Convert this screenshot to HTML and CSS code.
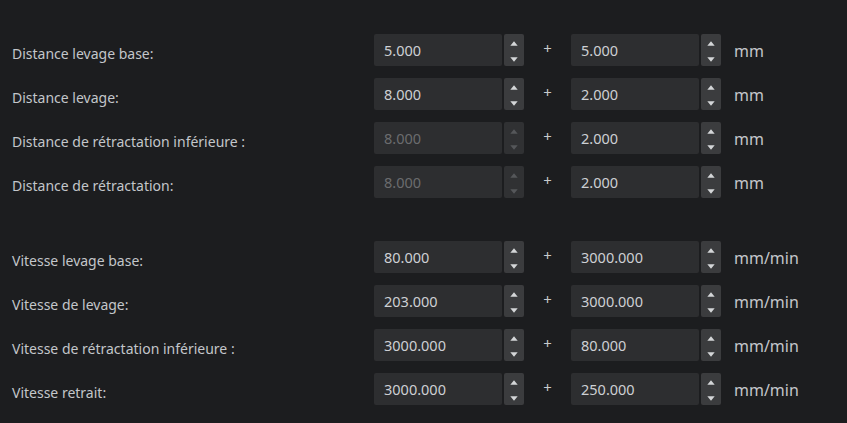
FILE: index.html
```html
<!DOCTYPE html>
<html lang="fr">
<head>
<meta charset="utf-8">
<link rel="stylesheet" href="styles.css">
</head>
<body>
<svg width="0" height="0" style="position:absolute">
  <defs>
    <symbol id="up" viewBox="0 0 8 5"><path d="M4 0.3 L7.7 4.7 L0.3 4.7 Z" fill="currentColor"/></symbol>
    <symbol id="down" viewBox="0 0 8 5"><path d="M0.3 0.3 L7.7 0.3 L4 4.7 Z" fill="currentColor"/></symbol>
  </defs>
</svg>
<div class="panel">
  <div class="group">
    <div class="row">
      <div class="label">Distance levage base:</div>
      <div class="spin"><div class="field">5.000</div><div class="btns"><svg class="a"><use href="#up"/></svg><svg class="a"><use href="#down"/></svg></div></div>
      <div class="plus">+</div>
      <div class="spin"><div class="field">5.000</div><div class="btns"><svg class="a"><use href="#up"/></svg><svg class="a"><use href="#down"/></svg></div></div>
      <div class="unit">mm</div>
    </div>
    <div class="row">
      <div class="label">Distance levage:</div>
      <div class="spin"><div class="field">8.000</div><div class="btns"><svg class="a"><use href="#up"/></svg><svg class="a"><use href="#down"/></svg></div></div>
      <div class="plus">+</div>
      <div class="spin"><div class="field">2.000</div><div class="btns"><svg class="a"><use href="#up"/></svg><svg class="a"><use href="#down"/></svg></div></div>
      <div class="unit">mm</div>
    </div>
    <div class="row">
      <div class="label">Distance de rétractation inférieure :</div>
      <div class="spin disabled"><div class="field">8.000</div><div class="btns"><svg class="a"><use href="#up"/></svg><svg class="a"><use href="#down"/></svg></div></div>
      <div class="plus">+</div>
      <div class="spin"><div class="field">2.000</div><div class="btns"><svg class="a"><use href="#up"/></svg><svg class="a"><use href="#down"/></svg></div></div>
      <div class="unit">mm</div>
    </div>
    <div class="row">
      <div class="label">Distance de rétractation:</div>
      <div class="spin disabled"><div class="field">8.000</div><div class="btns"><svg class="a"><use href="#up"/></svg><svg class="a"><use href="#down"/></svg></div></div>
      <div class="plus">+</div>
      <div class="spin"><div class="field">2.000</div><div class="btns"><svg class="a"><use href="#up"/></svg><svg class="a"><use href="#down"/></svg></div></div>
      <div class="unit">mm</div>
    </div>
  </div>
  <div class="group">
    <div class="row">
      <div class="label">Vitesse levage base:</div>
      <div class="spin"><div class="field">80.000</div><div class="btns"><svg class="a"><use href="#up"/></svg><svg class="a"><use href="#down"/></svg></div></div>
      <div class="plus">+</div>
      <div class="spin"><div class="field">3000.000</div><div class="btns"><svg class="a"><use href="#up"/></svg><svg class="a"><use href="#down"/></svg></div></div>
      <div class="unit">mm/min</div>
    </div>
    <div class="row">
      <div class="label">Vitesse de levage:</div>
      <div class="spin"><div class="field">203.000</div><div class="btns"><svg class="a"><use href="#up"/></svg><svg class="a"><use href="#down"/></svg></div></div>
      <div class="plus">+</div>
      <div class="spin"><div class="field">3000.000</div><div class="btns"><svg class="a"><use href="#up"/></svg><svg class="a"><use href="#down"/></svg></div></div>
      <div class="unit">mm/min</div>
    </div>
    <div class="row">
      <div class="label">Vitesse de rétractation inférieure :</div>
      <div class="spin"><div class="field">3000.000</div><div class="btns"><svg class="a"><use href="#up"/></svg><svg class="a"><use href="#down"/></svg></div></div>
      <div class="plus">+</div>
      <div class="spin"><div class="field">80.000</div><div class="btns"><svg class="a"><use href="#up"/></svg><svg class="a"><use href="#down"/></svg></div></div>
      <div class="unit">mm/min</div>
    </div>
    <div class="row">
      <div class="label">Vitesse retrait:</div>
      <div class="spin"><div class="field">3000.000</div><div class="btns"><svg class="a"><use href="#up"/></svg><svg class="a"><use href="#down"/></svg></div></div>
      <div class="plus">+</div>
      <div class="spin"><div class="field">250.000</div><div class="btns"><svg class="a"><use href="#up"/></svg><svg class="a"><use href="#down"/></svg></div></div>
      <div class="unit">mm/min</div>
    </div>
  </div>
</div>
</body>
</html>
```
FILE: styles.css
```css
html, body {
  margin: 0;
  padding: 0;
  background: #1c1d1f;
  height: 100%;
  overflow: hidden;
}
body {
  font-family: "Noto Sans", "Open Sans", sans-serif;
  color: #c3c6ca;
}
.panel {
  padding: 34px 0 0 12px;
  display: flex;
  flex-direction: column;
  gap: 43px;
}
.group {
  display: flex;
  flex-direction: column;
  gap: 12px;
}
.row {
  display: flex;
  align-items: center;
  height: 32px;
}
.label {
  width: 362px;
  font-size: 14px;
  padding-top: 6px;
  color: #c3c6ca;
  white-space: nowrap;
}
.spin {
  display: flex;
  gap: 2px;
  height: 32px;
}
.field {
  width: 118px;
  padding-left: 10px;
  background: #2d2e30;
  border-radius: 2px;
  font-size: 14.5px;
  line-height: 32px;
  color: #cdd0d4;
}
.btns {
  width: 20px;
  background: #3b3c3e;
  border-radius: 2px;
  display: flex;
  flex-direction: column;
  align-items: center;
  justify-content: space-between;
  padding: 7px 0 4px;
  box-sizing: border-box;
  color: #d4d6d8;
}
.a {
  width: 8px;
  height: 5px;
}
.disabled .field {
  color: #6b6c6e;
}
.disabled .btns {
  background: #303133;
  color: #55575a;
}
.plus {
  width: 47px;
  text-align: center;
  font-size: 15px;
  color: #c8cacc;
  padding-bottom: 4px;
}
.unit {
  margin-left: 13px;
  font-size: 16px;
  color: #c3c6ca;
  padding-top: 1px;
}
```
